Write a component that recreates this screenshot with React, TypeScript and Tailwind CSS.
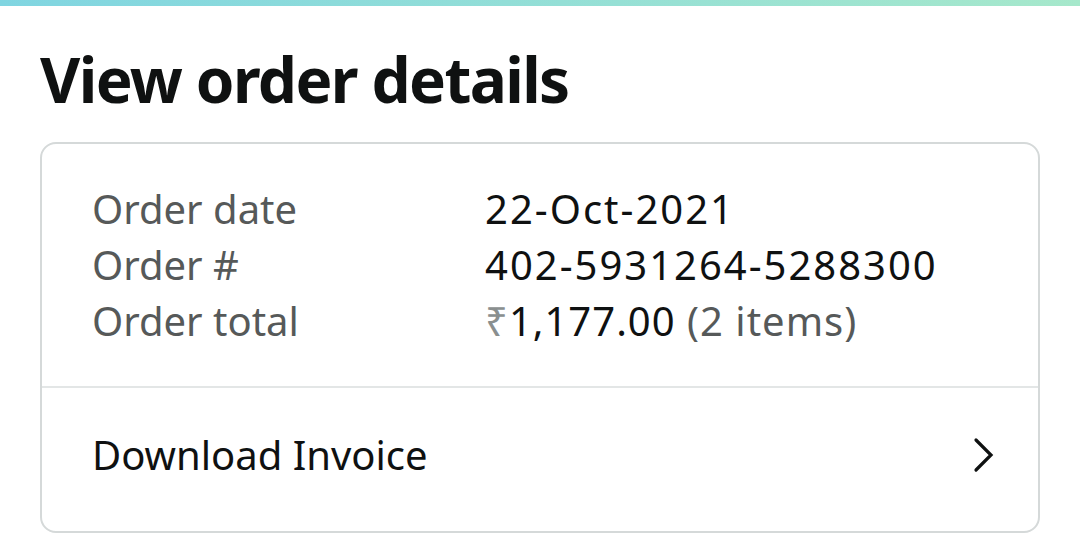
import * as React from 'react';

const rows = [
  { label: 'Order date', value: '22-Oct-2021' },
  { label: 'Order #', value: '402-5931264-5288300' },
];

/** Chevron used on tappable list rows. */
function Chevron() {
  return (
    <svg width="24" height="36" viewBox="0 0 24 36" fill="none" className="shrink-0">
      <path d="M4 3 L19 18 L4 33" stroke="#0f1111" strokeWidth="3.2" strokeLinecap="round" strokeLinejoin="miter" />
    </svg>
  );
}

export default function App() {
  return (
    <div className="h-[553px] w-[1080px] overflow-hidden bg-white font-['Noto_Sans',sans-serif]">
      <div className="h-[6px] bg-gradient-to-r from-[#80d5e1] to-[#a6e8cb]" />

      <h1 className="ml-[40px] mt-[33px] text-[62px] font-bold leading-[80px] tracking-[-1.6px] text-[#0f1111]">
        View order details
      </h1>

      <div className="mx-[40px] mt-[23px] rounded-[16px] border-2 border-[#d5d9d9]">
        <div className="px-[50px] pb-[37px] pt-[37px]">
          {rows.map((r) => (
            <div key={r.label} className="flex text-[40px] leading-[56px]">
              <span className="w-[393px] text-[#565959]">{r.label}</span>
              <span className="tracking-[2px] text-[#0f1111]">{r.value}</span>
            </div>
          ))}
          <div className="flex text-[40px] leading-[56px]">
            <span className="w-[393px] text-[#565959]">Order total</span>
            <span className="tracking-[1px] text-[#0f1111]">
              <span className="text-[#8a8f8f]">₹</span>1,177.00{' '}
              <span className="text-[#565959]">(2 items)</span>
            </span>
          </div>
        </div>

        <div className="h-[2px] bg-[#e3e6e6]" />

        <div className="flex h-[143px] items-center justify-between pb-[10px] pl-[50px] pr-[42px]">
          <span className="text-[40px] text-[#0f1111]">Download Invoice</span>
          <Chevron />
        </div>
      </div>
    </div>
  );
}
